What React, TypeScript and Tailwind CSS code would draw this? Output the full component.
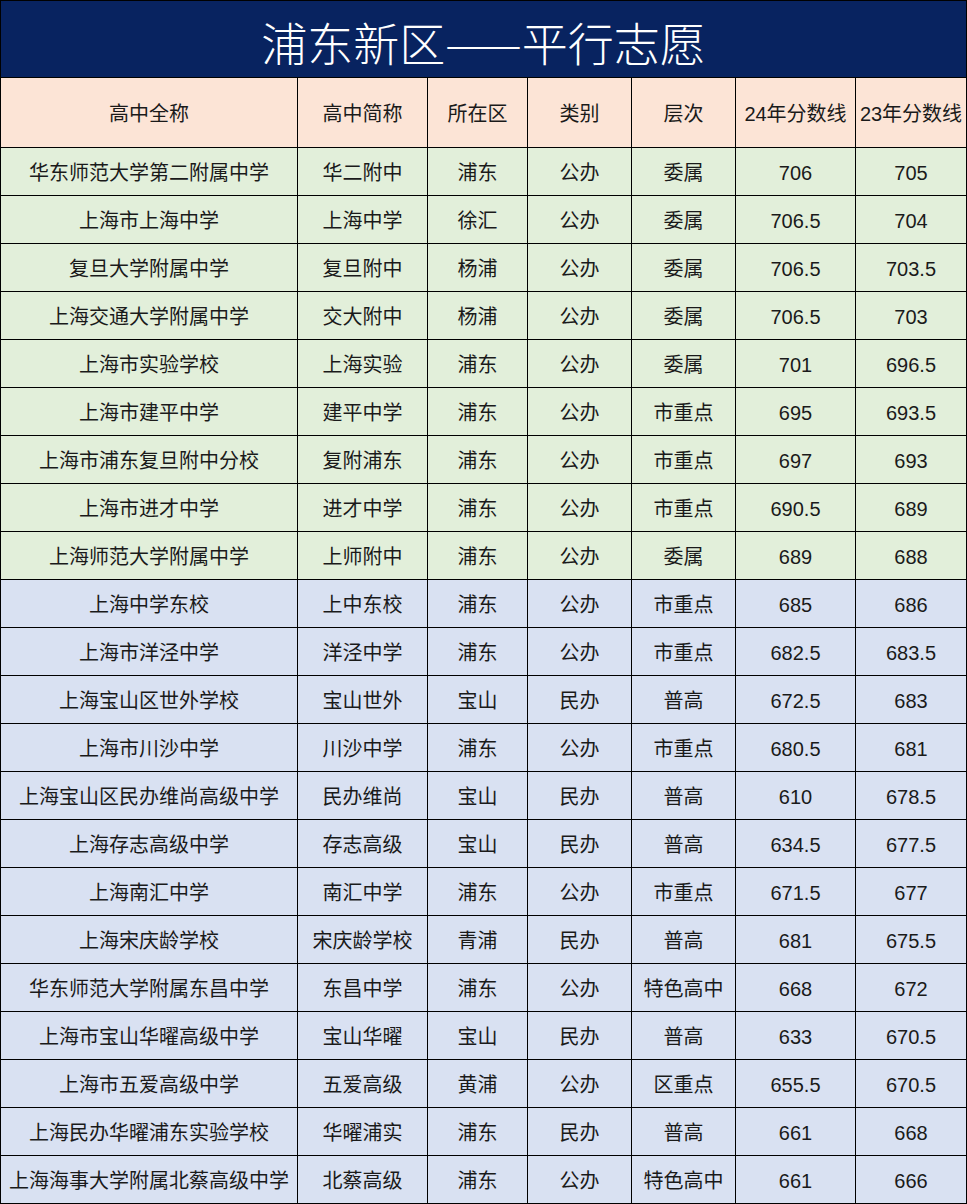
import React from "react";

type Row = [string, string, string, string, string, string, string];

const green: Row[] = [
  ["华东师范大学第二附属中学", "华二附中", "浦东", "公办", "委属", "706", "705"],
  ["上海市上海中学", "上海中学", "徐汇", "公办", "委属", "706.5", "704"],
  ["复旦大学附属中学", "复旦附中", "杨浦", "公办", "委属", "706.5", "703.5"],
  ["上海交通大学附属中学", "交大附中", "杨浦", "公办", "委属", "706.5", "703"],
  ["上海市实验学校", "上海实验", "浦东", "公办", "委属", "701", "696.5"],
  ["上海市建平中学", "建平中学", "浦东", "公办", "市重点", "695", "693.5"],
  ["上海市浦东复旦附中分校", "复附浦东", "浦东", "公办", "市重点", "697", "693"],
  ["上海市进才中学", "进才中学", "浦东", "公办", "市重点", "690.5", "689"],
  ["上海师范大学附属中学", "上师附中", "浦东", "公办", "委属", "689", "688"],
];

const blue: Row[] = [
  ["上海中学东校", "上中东校", "浦东", "公办", "市重点", "685", "686"],
  ["上海市洋泾中学", "洋泾中学", "浦东", "公办", "市重点", "682.5", "683.5"],
  ["上海宝山区世外学校", "宝山世外", "宝山", "民办", "普高", "672.5", "683"],
  ["上海市川沙中学", "川沙中学", "浦东", "公办", "市重点", "680.5", "681"],
  ["上海宝山区民办维尚高级中学", "民办维尚", "宝山", "民办", "普高", "610", "678.5"],
  ["上海存志高级中学", "存志高级", "宝山", "民办", "普高", "634.5", "677.5"],
  ["上海南汇中学", "南汇中学", "浦东", "公办", "市重点", "671.5", "677"],
  ["上海宋庆龄学校", "宋庆龄学校", "青浦", "民办", "普高", "681", "675.5"],
  ["华东师范大学附属东昌中学", "东昌中学", "浦东", "公办", "特色高中", "668", "672"],
  ["上海市宝山华曜高级中学", "宝山华曜", "宝山", "民办", "普高", "633", "670.5"],
  ["上海市五爱高级中学", "五爱高级", "黄浦", "公办", "区重点", "655.5", "670.5"],
  ["上海民办华曜浦东实验学校", "华曜浦实", "浦东", "民办", "普高", "661", "668"],
  ["上海海事大学附属北蔡高级中学", "北蔡高级", "浦东", "公办", "特色高中", "661", "666"],
];

const header: Row = ["高中全称", "高中简称", "所在区", "类别", "层次", "24年分数线", "23年分数线"];

const cols = "grid grid-cols-[298px_130px_100px_104px_104px_120px_111px]";
const font = { fontFamily: '"Liberation Sans", "Noto Sans CJK SC", sans-serif' };
const cjk = { fontFamily: '"Noto Sans CJK SC", sans-serif' };

function Cells({ row, h, bg }: { row: Row; h: string; bg: string }) {
  return (
    <div className={`${cols} ${bg}`}>
      {row.map((c, i) => (
        <div
          key={i}
          className={`${h} flex items-center justify-center pt-[2px] border-b border-black text-[20px] leading-none text-[#1a1a1a] whitespace-nowrap ${
            i === 0 ? "border-l border-r" : "border-r"
          }`}
        >
          {c}
        </div>
      ))}
    </div>
  );
}

export default function App() {
  return (
    <div className="w-[967px] h-[1204px] overflow-hidden bg-white" style={font}>
      <div className="h-[78px] bg-[#082360] border border-black flex items-center justify-center">
        <span className="text-white text-[46px] font-light leading-none mt-[4px]" style={cjk}>
          浦东新区——平行志愿
        </span>
      </div>
      <Cells row={header} h="h-[70px]" bg="bg-[#fce4d6]" />
      {green.map((r, i) => (
        <Cells key={"g" + i} row={r} h="h-[48px]" bg="bg-[#e2efda]" />
      ))}
      {blue.map((r, i) => (
        <Cells key={"b" + i} row={r} h="h-[48px]" bg="bg-[#d9e1f2]" />
      ))}
    </div>
  );
}
